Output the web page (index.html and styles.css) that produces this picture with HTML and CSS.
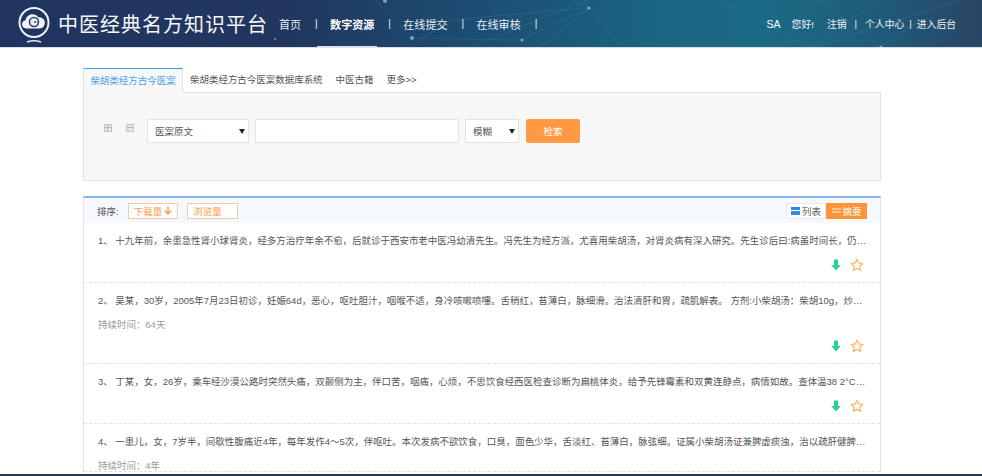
FILE: index.html
```html
<!DOCTYPE html>
<html>
<head>
<meta charset="utf-8">
<title>中医经典名方知识平台</title>
<link rel="stylesheet" href="styles.css">
</head>
<body>

<div class="header">
	<svg class="headerBg" width="982" height="47" viewBox="0 0 982 47">
		<g stroke="#5fb4d8" stroke-opacity="0.22" stroke-width="0.7" fill="none">
			<path d="M410 47L450 20L590 8L620 47"/>
			<path d="M470 47L600 -5"/>
			<path d="M375 0L412 38L520 40L590 8"/>
			<path d="M540 47L590 8L560 -5"/>
			<path d="M780 47L820 0L880 47L920 20"/>
			<path d="M815 47L880 26L960 0"/>
			<path d="M720 0L810 47L880 0"/>
		</g>
		<g fill="#8fcde6" fill-opacity="0.7">
			<circle cx="589" cy="8" r="1.6"/>
			<circle cx="412" cy="38" r="2"/>
			<circle cx="522" cy="40" r="1.6"/>
			<circle cx="881" cy="47" r="1.6"/>
			<circle cx="385" cy="1" r="2"/>
			<circle cx="275" cy="39" r="1"/>
		</g>
	</svg>
	<div class="brand">
		<svg class="logo" width="34" height="38" viewBox="0 0 34 38">
			<circle cx="17" cy="16.500" r="14.500" fill="none" stroke="#eef2f6" stroke-width="2"/>
			<path d="M9 22c-3 0-4.500-2-4.500-4.200 0-2.200 1.500-3.800 3.500-4 .6-3.500 3.500-6 7-6 2.500 0 4.500 1 5.800 3 3.500-.3 6.500 2 6.500 5.500 0 3.500-2.300 5.700-5.300 5.700z" fill="#eef2f6" transform="translate(.5 .5)"/>
			<circle cx="17" cy="16" r="4.500" fill="none" stroke="#2a4370" stroke-width="1.600"/>
			<path d="M17 16h2.500" stroke="#2a4370" stroke-width="1.400"/>
			<path d="M10 36c4-1.500 10-1.500 14 0" fill="none" stroke="#dfe5ec" stroke-width="1.500"/>
		</svg>
		<span class="siteName">中医经典名方知识平台</span>
	</div>
	<div class="nav">
		<a class="navItem">首页</a><span class="navSep">|</span>
		<a class="navItem active">数字资源</a><span class="navSep">|</span>
		<a class="navItem">在线提交</a><span class="navSep">|</span>
		<a class="navItem">在线审核</a><span class="navSep">|</span>
	</div>
	<div class="userBar">
		<span class="userName">SA</span>
		<span class="hello">您好!</span>
		<a>注销</a><span class="userSep">|</span><a>个人中心</a><span class="userSep narrow">|</span><a>进入后台</a>
	</div>
</div>

<div class="page">
	<div class="tabs">
		<a class="tab current">柴胡类经方古今医案</a>
		<a class="tab">柴胡类经方古今医案数据库系统</a>
		<a class="tab">中医古籍</a>
		<a class="tab">更多&gt;&gt;</a>
	</div>
	<div class="searchPanel">
		<span class="boxIcon plus"></span>
		<span class="boxIcon minus"></span>
		<span class="selectWrap fieldSelect">
			<select><option>医案原文</option></select>
		</span>
		<input class="keyword" type="text">
		<span class="selectWrap modeSelect">
			<select><option>模糊</option></select>
		</span>
		<button class="searchBtn">检索</button>
	</div>

	<div class="results">
		<div class="sortBar">
			<span class="sortLabel">排序:</span>
			<a class="sortBtn">下载量<svg width="8" height="9" viewBox="0 0 8 9"><path d="M4 0.500V8M0.800 4.800L4 8L7.200 4.800" fill="none" stroke="#ff9a4d" stroke-width="1.500"/></svg></a>
			<a class="sortBtn views">浏览量</a>
			<div class="viewSwitch">
				<a class="viewBtn"><span class="viewIcon"></span>列表</a>
				<a class="viewBtn on"><span class="viewIcon"></span>摘要</a>
			</div>
		</div>

		<div class="item">
			<p class="summary">1、 十九年前，余患急性肾小球肾炎，经多方治疗年余不愈，后就诊于西安市老中医冯幼清先生。冯先生为经方派，尤喜用柴胡汤，对肾炎病有深入研究。先生诊后曰:病虽时间长，仍属少阳枢机不利，三焦水道失调所致，遂投小柴胡汤加味治之。</p>
			<div class="actions">
				<svg class="down" width="10" height="12" viewBox="0 0 10 12"><path d="M3 0.500H7V6H9.800L5 11.500L0.200 6H3z" fill="#2fcf98"/></svg>
				<svg class="star" width="14" height="14" viewBox="0 0 13 13"><path d="M6.500 1.200L8.100 4.600L11.900 5.100L9.100 7.700L9.800 11.500L6.500 9.600L3.200 11.500L3.900 7.700L1.100 5.100L4.900 4.600z" fill="none" stroke="#fdb55f" stroke-width="1.100" stroke-linejoin="round"/></svg>
			</div>
		</div>

		<div class="item">
			<p class="summary">2、 吴某，30岁，2005年7月23日初诊，妊娠64d，恶心，呕吐胆汁，咽喉不适，身冷咳嗽喷嚏。舌稍红，苔薄白，脉细滑。治法清肝和胃，疏肌解表。 方剂:小柴胡汤：柴胡10g，炒黄芩10g，半夏6g，生姜3片，大枣5枚，甘草3g。</p>
			<p class="duration">持续时间：64天</p>
			<div class="actions">
				<svg class="down" width="10" height="12" viewBox="0 0 10 12"><path d="M3 0.500H7V6H9.800L5 11.500L0.200 6H3z" fill="#2fcf98"/></svg>
				<svg class="star" width="14" height="14" viewBox="0 0 13 13"><path d="M6.500 1.200L8.100 4.600L11.900 5.100L9.100 7.700L9.800 11.500L6.500 9.600L3.200 11.500L3.900 7.700L1.100 5.100L4.900 4.600z" fill="none" stroke="#fdb55f" stroke-width="1.100" stroke-linejoin="round"/></svg>
			</div>
		</div>

		<div class="item">
			<p class="summary">3、 丁某，女，26岁，乘车经沙漠公路时突然头痛，双颞侧为主，伴口苦，咽痛，心烦，不思饮食经西医检查诊断为扁桃体炎，给予先锋霉素和双黄连静点，病情如故。查体温38 2°C，咽部充血，扁桃体肿大，舌红苔薄黄，脉弦数。</p>
			<div class="actions">
				<svg class="down" width="10" height="12" viewBox="0 0 10 12"><path d="M3 0.500H7V6H9.800L5 11.500L0.200 6H3z" fill="#2fcf98"/></svg>
				<svg class="star" width="14" height="14" viewBox="0 0 13 13"><path d="M6.500 1.200L8.100 4.600L11.900 5.100L9.100 7.700L9.800 11.500L6.500 9.600L3.200 11.500L3.900 7.700L1.100 5.100L4.900 4.600z" fill="none" stroke="#fdb55f" stroke-width="1.100" stroke-linejoin="round"/></svg>
			</div>
		</div>

		<div class="item">
			<p class="summary">4、 一患儿，女，7岁半，间歇性腹痛近4年，每年发作4～5次，伴呕吐。本次发病不欲饮食，口臭，面色少华，舌淡红、苔薄白，脉弦细。证属小柴胡汤证兼脾虚痰浊，治以疏肝健脾，化痰和胃，方用小柴胡汤加减治疗。</p>
			<p class="duration">持续时间：4年</p>
		</div>
	</div>
</div>

<div class="footerBar"></div>

</body>
</html>
```

FILE: styles.css
```css
html, body{
	height: 100%;
}
body{
	margin: 0;
	display: flex;
	flex-direction: column;
	overflow: hidden;
	background: #fff;
	font: 9.48px "Liberation Sans", "Noto Sans CJK SC", sans-serif;
	color: #555;
}
p{
	margin: 0;
}

/* header */
.header{
	position: relative;
	flex: none;
	display: flex;
	align-items: center;
	height: 47px;
	border-bottom: 1px solid #d8dfe8;
	color: #e8edf2;
	background: linear-gradient(90deg, #1f3560 0%, #21375f 30%, #1c4f74 50%, #1a6683 68%, #1b6a85 78%, #1f5a78 90%, #2a4565 100%);
}
.headerBg{
	position: absolute;
	left: 0;
	top: 0;
}
.brand{
	position: relative;
	display: flex;
	align-items: center;
	width: 279px;
	height: 100%;
	padding-left: 17px;
	box-sizing: border-box;
}
.logo{
	margin-top: 2px;
}
.siteName{
	margin-left: 7px;
	font-size: 20px;
	letter-spacing: 1px;
	color: #f6f7f8;
	white-space: nowrap;
}
.nav{
	position: relative;
	display: flex;
	align-items: center;
	height: 100%;
	font-size: 11.06px;
}
.navItem{
	display: flex;
	align-items: center;
	height: 100%;
	box-sizing: border-box;
}
.navItem.active{
	position: relative;
	font-weight: bold;
	color: #fff;
}
.navItem.active::after{
	content: "";
	position: absolute;
	left: -13px;
	right: -3px;
	bottom: -1px;
	height: 2px;
	background: #dbe2ec;
}
.navSep{
	width: 1px;
	margin: 0 14px;
	text-align: center;
	color: #eef2f6;
	font-size: 10px;
}
.userBar{
	position: relative;
	display: flex;
	align-items: center;
	margin-left: auto;
	padding-right: 26px;
	font-size: 9.8px;
	color: #f2f5f7;
}
.userName{
	margin-right: 11px;
	font-size: 10.500px;
	color: #fff;
}
.hello{
	margin-right: 13px;
}
.userSep{
	margin: 0 8px;
}
.userSep.narrow{
	margin: 0 5px;
}

/* tabs and search */
.page{
	flex: 1;
	min-height: 0;
	overflow: hidden;
	padding: 20px 101px 0 83px;
}
.tabs{
	display: flex;
	height: 24px;
}
.tab{
	display: flex;
	align-items: center;
	margin-right: 13px;
	padding-bottom: 2px;
	color: #555;
	white-space: nowrap;
}
.tab.current{
	box-sizing: border-box;
	width: 100px;
	height: 25px;
	margin-right: 7px;
	justify-content: center;
	position: relative;
	z-index: 1;
	border-top: 1px solid #3b9df0;
	border-left: 1px solid #e3e3e3;
	border-right: 1px solid #e3e3e3;
	background: #f7f7f7;
	color: #4a9ff0;
}
.searchPanel{
	display: flex;
	align-items: center;
	box-sizing: border-box;
	height: 89px;
	padding: 0 0 11px 20px;
	border: 1px solid #e3e3e3;
	background: #f7f7f7;
}
.boxIcon{
	position: relative;
	box-sizing: border-box;
	width: 8px;
	height: 8px;
	margin-right: 14px;
	margin-top: -6px;
	border: 1px solid #c4c4c4;
	background: #e6e6e6;
}
.boxIcon::before{
	content: "";
	position: absolute;
	left: 0;
	right: 0;
	top: 2px;
	height: 1px;
	background: #b8b8b8;
}
.plus::after{
	content: "";
	position: absolute;
	top: 0;
	bottom: 0;
	left: 2px;
	width: 1px;
	background: #b8b8b8;
}
.minus{
	margin-right: 13px;
}
.selectWrap{
	position: relative;
	display: block;
	height: 24px;
}
.selectWrap::after{
	content: "";
	position: absolute;
	right: 4px;
	top: 10px;
	border: 3px solid transparent;
	border-top: 5px solid #222;
	border-bottom: 0;
}
.selectWrap select{
	width: 100%;
	height: 100%;
	box-sizing: border-box;
	padding: 0 0 0 7px;
	border: 1px solid #e4e4e4;
	border-radius: 0;
	background: #fff;
	color: #555;
	font: inherit;
	appearance: none;
}
.fieldSelect{
	width: 102px;
}
.keyword{
	box-sizing: border-box;
	width: 204px;
	height: 24px;
	margin: 0 6px;
	padding: 0 6px;
	border: 1px solid #e4e4e4;
	background: #fff;
}
.modeSelect{
	width: 54px;
}
.searchBtn{
	width: 54px;
	height: 24px;
	margin-left: 7px;
	padding: 0;
	border: 0;
	border-radius: 2px;
	background: #ff9944;
	color: #fff;
	font: inherit;
}

/* result list */
.results{
	margin-top: 15px;
	border-top: 2px solid #8ab4ee;
	border-left: 1px solid #e3e3e3;
	border-right: 1px solid #e3e3e3;
}
.sortBar{
	display: flex;
	align-items: center;
	box-sizing: border-box;
	height: 25px;
	padding: 0 13px;
	background: #f5f8fe;
}
.sortLabel{
	width: 31px;
	color: #555;
}
.sortBtn{
	display: flex;
	align-items: center;
	justify-content: center;
	gap: 2px;
	box-sizing: border-box;
	width: 50px;
	height: 16px;
	margin-right: 9px;
	border: 1px solid #fccba4;
	background: #fff;
	color: #ff9a4d;
}
.sortBtn.views{
	padding-right: 10px;
	width: 51px;
}
.viewSwitch{
	display: flex;
	margin-left: auto;
}
.viewBtn{
	display: flex;
	align-items: center;
	justify-content: center;
	gap: 2px;
	box-sizing: border-box;
	width: 40px;
	height: 16px;
	border: 1px solid #e6e9ee;
	background: #fff;
	color: #666;
}
.viewBtn.on{
	width: 41px;
	border: 0;
	background: #ff9338;
	color: #fff;
}
.viewIcon{
	box-sizing: border-box;
	width: 9px;
	height: 8px;
	background: linear-gradient(#2e8ae0 0 3px, #fff 3px 4px, #2e8ae0 4px);
}
.on .viewIcon{
	height: 5px;
	background: linear-gradient(#ffc58f 0 2px, #ff9338 2px 3px, #ffc58f 3px);
}
.item{
	position: relative;
	padding: 10px 13px 0 14px;
	border-bottom: 1px dashed #e2e2e2;
}
.summary{
	line-height: 16px;
	white-space: nowrap;
	overflow: hidden;
	text-overflow: ellipsis;
	color: #555;
}
.duration{
	margin-top: 8px;
	margin-bottom: -3px;
	line-height: 16px;
	color: #999;
}
.actions{
	display: flex;
	align-items: center;
	justify-content: flex-end;
	gap: 9px;
	height: 17px;
	padding: 7px 3px 9px 0;
}
.footerBar{
	flex: none;
	height: 2px;
	background: #233a55;
}
```
